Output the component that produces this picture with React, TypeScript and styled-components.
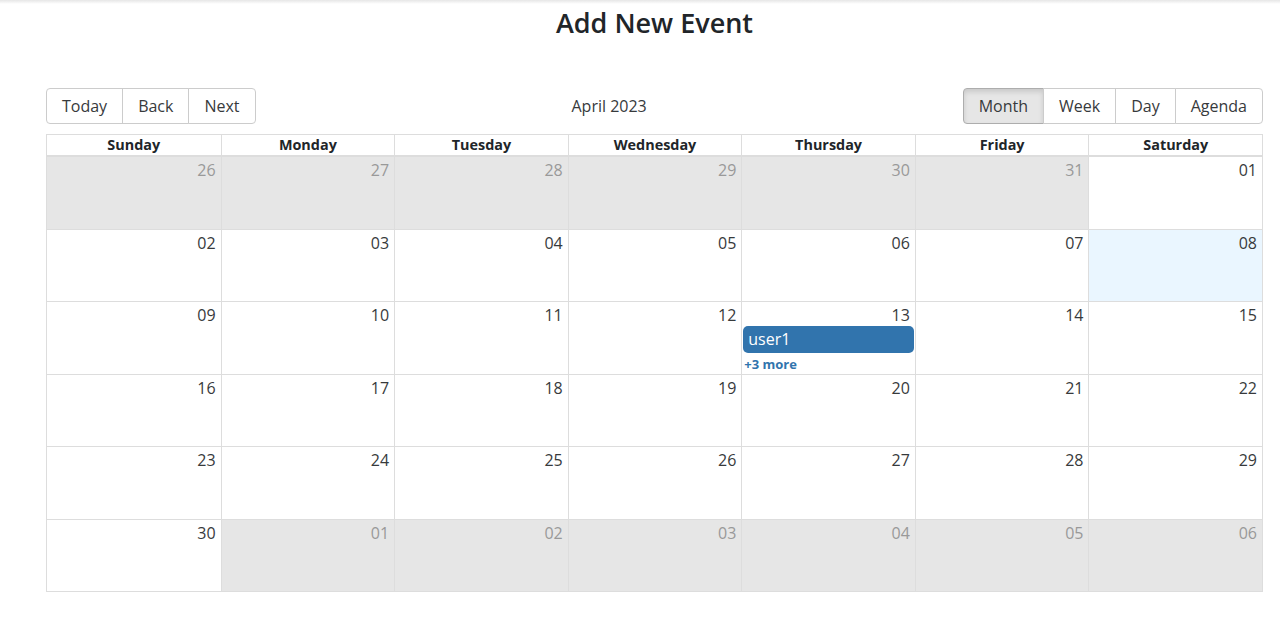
import React from "react";
import styled, { createGlobalStyle, css } from "styled-components";

const Global = createGlobalStyle`
  html, body { margin: 0; padding: 0; background: #fff; }
  body { font-family: "Open Sans", "Noto Sans", sans-serif; color: #373a3c; }
  * { box-sizing: border-box; }
`;

const TopShade = styled.div`
  height: 4px;
  background: linear-gradient(#e6e6e6, #fff);
`;

const Page = styled.div`
  padding: 0 17px 0 46px;
`;

const Title = styled.h1`
  margin: 0;
  margin-top: 1px;
  text-align: center;
  font-size: 27px;
  font-weight: 600;
  color: #212529;
  line-height: 36px;
`;

const Toolbar = styled.div`
  display: flex;
  align-items: center;
  margin-top: 47px;
  margin-bottom: 10px;
  font-size: 16px;
`;

const Group = styled.div`
  display: inline-flex;
`;

const Btn = styled.button<{ $active?: boolean; $pos: "first" | "mid" | "last" }>`
  font-family: inherit;
  font-size: 16px;
  color: #373a3c;
  background: #fff;
  border: 1px solid #ccc;
  padding: 0 15px;
  height: 36px;
  line-height: 34px;
  margin: 0;
  ${(p) =>
    p.$pos === "first"
      ? css`border-radius: 4px 0 0 4px;`
      : p.$pos === "last"
      ? css`border-radius: 0 4px 4px 0; margin-left: -1px;`
      : css`border-radius: 0; margin-left: -1px;`}
  ${(p) =>
    p.$active &&
    css`
      background: #e6e6e6;
      border-color: #adadad;
      box-shadow: inset 0 3px 5px rgba(0, 0, 0, 0.125);
    `}
`;

const Label = styled.span`
  flex: 1;
  text-align: center;
  padding: 0 10px;
`;

const Month = styled.div`
  border: 1px solid #ddd;
  display: flex;
  flex-direction: column;
  height: 458px;
`;

const HeaderRow = styled.div`
  display: grid;
  grid-template-columns: repeat(7, 1fr);
  height: 21px;
`;

const HeaderCell = styled.div`
  border-left: 1px solid #ddd;
  border-bottom: 1px solid #ddd;
  text-align: center;
  font-weight: bold;
  font-size: 14.4px;
  line-height: 20px;
  color: #212529;
  &:first-child { border-left: none; }
`;

const Row = styled.div`
  flex: 1;
  display: grid;
  grid-template-columns: repeat(7, 1fr);
  border-top: 1px solid #ddd;
  &:first-of-type { border-top: none; }
  min-height: 0;
`;

const Cell = styled.div<{ $off?: boolean; $today?: boolean }>`
  border-left: 1px solid #ddd;
  &:first-child { border-left: none; }
  background: ${(p) => (p.$today ? "#eaf6ff" : p.$off ? "#e6e6e6" : "#fff")};
  display: flex;
  flex-direction: column;
  min-width: 0;
`;

const DateNum = styled.div<{ $off?: boolean }>`
  text-align: right;
  padding: 2px 5px 0 0;
  font-size: 16px;
  line-height: 22px;
  height: 24px;
  color: ${(p) => (p.$off ? "#999" : "#373a3c")};
`;

const Event = styled.div`
  margin: 0 1px 1px 1px;
  background: #3174ad;
  color: #fff;
  border-radius: 5px;
  padding: 2px 5px;
  font-size: 16px;
  line-height: 23px;
`;

const More = styled.div`
  margin: 1px 0 0 2px;
  color: #3174ad;
  font-weight: bold;
  font-size: 13px;
  line-height: 18px;
`;

const days = ["Sunday", "Monday", "Tuesday", "Wednesday", "Thursday", "Friday", "Saturday"];

type D = { n: string; off?: boolean; today?: boolean; event?: boolean };

const weeks: D[][] = [
  ["26", "27", "28", "29", "30", "31"].map((n) => ({ n, off: true })).concat([{ n: "01" }]),
  ["02", "03", "04", "05", "06", "07"].map((n) => ({ n })).concat([{ n: "08", today: true }]),
  [{ n: "09" }, { n: "10" }, { n: "11" }, { n: "12" }, { n: "13", event: true }, { n: "14" }, { n: "15" }],
  ["16", "17", "18", "19", "20", "21", "22"].map((n) => ({ n })),
  ["23", "24", "25", "26", "27", "28", "29"].map((n) => ({ n })),
  [{ n: "30" } as D].concat(["01", "02", "03", "04", "05", "06"].map((n) => ({ n, off: true }))),
];

export default function App() {
  return (
    <>
      <Global />
      <TopShade />
      <Page>
        <Title>Add New Event</Title>
        <Toolbar>
          <Group>
            <Btn $pos="first">Today</Btn>
            <Btn $pos="mid">Back</Btn>
            <Btn $pos="last">Next</Btn>
          </Group>
          <Label>April 2023</Label>
          <Group>
            <Btn $pos="first" $active>Month</Btn>
            <Btn $pos="mid">Week</Btn>
            <Btn $pos="mid">Day</Btn>
            <Btn $pos="last">Agenda</Btn>
          </Group>
        </Toolbar>
        <Month>
          <HeaderRow>
            {days.map((d) => (
              <HeaderCell key={d}>{d}</HeaderCell>
            ))}
          </HeaderRow>
          {weeks.map((w, i) => (
            <Row key={i}>
              {w.map((d, j) => (
                <Cell key={j} $off={d.off} $today={d.today}>
                  <DateNum $off={d.off}>{d.n}</DateNum>
                  {d.event && (
                    <>
                      <Event>user1</Event>
                      <More>+3 more</More>
                    </>
                  )}
                </Cell>
              ))}
            </Row>
          ))}
        </Month>
      </Page>
    </>
  );
}
